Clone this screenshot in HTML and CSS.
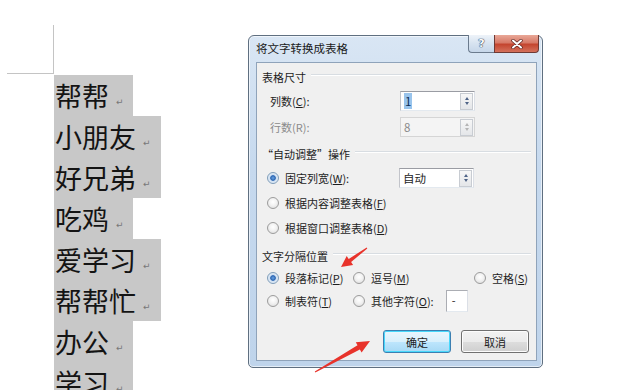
FILE: index.html
```html
<!DOCTYPE html>
<html lang="zh">
<head>
<meta charset="utf-8">
<title>将文字转换成表格</title>
<link rel="stylesheet" href="styles.css">
</head>
<body>
<div class="page">
  <div class="doc">
    <div class="corner"></div>
    <div class="lines">
      <div class="ln w2">帮帮<span class="pm">↵</span></div>
      <div class="ln w3">小朋友<span class="pm">↵</span></div>
      <div class="ln w3">好兄弟<span class="pm">↵</span></div>
      <div class="ln w2">吃鸡<span class="pm">↵</span></div>
      <div class="ln w3">爱学习<span class="pm">↵</span></div>
      <div class="ln w3">帮帮忙<span class="pm">↵</span></div>
      <div class="ln w2">办公<span class="pm">↵</span></div>
      <div class="ln w2">学习<span class="pm">↵</span></div>
    </div>
  </div>

  <div class="dlg">
    <div class="titlebar">
      <span class="title">将文字转换成表格</span>
      <div class="tbtns">
        <span class="help">?</span>
        <span class="close">
          <svg width="12" height="10" viewBox="0 0 12 10"><path d="M2 1.5 L10 8.5 M10 1.5 L2 8.5" stroke="#5a2320" stroke-width="3.4" stroke-linecap="round"/><path d="M2 1.5 L10 8.5 M10 1.5 L2 8.5" stroke="#fff" stroke-width="2" stroke-linecap="round"/></svg>
        </span>
      </div>
    </div>
    <div class="panel">
      <div class="grp g1"><span>表格尺寸</span><i class="rule"></i></div>
      <div class="row r-cols">
        <span class="lab">列数(<u>C</u>):</span>
        <div class="spin"><span class="val"><span class="sel">1</span></span><span class="sb"><i class="up"></i><i class="dn"></i></span></div>
      </div>
      <div class="row r-rows">
        <span class="lab dis">行数(R):</span>
        <div class="spin off"><span class="val">8</span><span class="sb"><i class="up"></i><i class="dn"></i></span></div>
      </div>

      <div class="grp g2"><span>“自动调整”操作</span><i class="rule"></i></div>
      <div class="row rr r-fix">
        <span class="radio on"></span><span class="rlab">固定列宽(<u>W</u>):</span>
        <div class="spin"><span class="val">自动</span><span class="sb"><i class="up"></i><i class="dn"></i></span></div>
      </div>
      <div class="row rr r-gap5">
        <span class="radio"></span><span class="rlab">根据内容调整表格(<u>F</u>)</span>
      </div>
      <div class="row rr r-gap5">
        <span class="radio"></span><span class="rlab">根据窗口调整表格(<u>D</u>)</span>
      </div>

      <div class="grp g3"><span>文字分隔位置</span><i class="rule"></i></div>
      <div class="row rr r-gap5">
        <div class="opt c1"><span class="radio on"></span><span class="rlab">段落标记(<u>P</u>)</span></div>
        <div class="opt c2"><span class="radio"></span><span class="rlab">逗号(<u>M</u>)</span></div>
        <div class="opt"><span class="radio"></span><span class="rlab">空格(<u>S</u>)</span></div>
      </div>
      <div class="row rr r-tab">
        <div class="opt c1"><span class="radio"></span><span class="rlab">制表符(<u>T</u>)</span></div>
        <div class="opt c2"><span class="radio"></span><span class="rlab">其他字符(<u>O</u>):</span><span class="small">-</span></div>
      </div>

      <div class="btns">
        <span class="btn def">确定</span>
        <span class="btn">取消</span>
      </div>
    </div>
  </div>

  <svg class="arrows" width="640" height="390" viewBox="0 0 640 390">
    <polygon fill="#e8332b" points="367.3,248.4 351.1,262.1 353.1,264.9 341,267 346.7,256.1 348.7,258.9 366.7,247.6"/>
    <polygon fill="#e8332b" points="315.3,372.4 359.9,349.6 361.6,352.6 370,341 355.8,342.2 357.5,345.2 314.8,371.6"/>
  </svg>
</div>
</body>
</html>
```

FILE: styles.css
```css
html, body {
  margin: 0;
  padding: 0;
  background: #fff;
}

.page {
  position: relative;
  width: 640px;
  height: 390px;
  overflow: hidden;
  background: #fff;
  font-family: "Noto Sans CJK SC", "Noto Sans", sans-serif;
}

/* ---------- document ---------- */
.doc {
  padding-top: 25px;
}

.corner {
  margin-left: 7px;
  width: 46px;
  height: 48px;
  border-right: 1px solid #c4c4c4;
  border-bottom: 1px solid #c4c4c4;
}

.lines {
  margin-top: 1px;
  margin-left: 54px;
}

.ln {
  height: 41px;
  line-height: 41px;
  font-size: 27px;
  color: #141414;
  background: #c8c8c8;
  padding-left: 1px;
  box-sizing: border-box;
  white-space: nowrap;
}

.w2 { width: 79px; }
.w3 { width: 107px; }

.pm {
  font-family: "DejaVu Sans", sans-serif;
  font-size: 9px;
  color: #777;
  margin-left: 7px;
  vertical-align: 2px;
}

/* ---------- dialog ---------- */
.dlg {
  position: absolute;
  left: 248px;
  top: 35px;
  width: 295px;
  height: 333px;
  box-sizing: border-box;
  border: 1px solid #5f6f80;
  border-radius: 6px 6px 5px 5px;
  background: linear-gradient(#d9e6f4, #c6d9ee 40%, #bfd4eb);
  box-shadow: inset 0 0 0 1px rgba(255,255,255,0.6);
  display: flex;
  flex-direction: column;
  font-size: 11px;
  color: #1e1e1e;
}

.titlebar {
  height: 26px;
  display: flex;
  align-items: flex-start;
  padding-left: 7px;
  padding-right: 3px;
}

.title {
  line-height: 24px;
  font-size: 11.5px;
  color: #1a1a1a;
}

.tbtns {
  margin-left: auto;
  display: flex;
  margin-top: -1px;
}

.help, .close {
  height: 18px;
  box-sizing: border-box;
  border: 1px solid #6b7b8e;
  border-top: none;
  display: flex;
  align-items: center;
  justify-content: center;
}

.help {
  width: 26px;
  border-radius: 0 0 0 4px;
  background: linear-gradient(#eef3f9, #d7e3f0 50%, #c6d6e9);
  font-family: "DejaVu Sans", sans-serif;
  font-size: 11px;
  font-weight: bold;
  color: #fdfdfd;
  text-shadow: 0 0 1px #2d4060, 0 0 1px #2d4060, 0 0 1px #2d4060;
  border-right: none;
}

.close {
  width: 45px;
  border-color: #6e3a35;
  border-radius: 0 0 4px 0;
  background: linear-gradient(#e9a898, #d77a68 45%, #c4452f 55%, #d4715c);
}

.panel {
  flex: 1;
  margin: 0 5px 6px 7px;
  border: 1px solid #8fa3ba;
  background: #f0f0f0;
  padding: 6px 5px 0 5px;
  display: flex;
  flex-direction: column;
}

.grp {
  height: 15px;
  display: flex;
  align-items: center;
  gap: 5px;
  color: #1c1c1c;
  white-space: nowrap;
}

.rule {
  flex: 1;
  height: 1px;
  background: #d8dde2;
  border-bottom: 1px solid #fff;
  margin-top: -3px;
}

.g2 { margin-top: 9px; }
.g3 { margin-top: 10px; }

.row {
  height: 20px;
  display: flex;
  align-items: center;
  white-space: nowrap;
}

.r-cols { margin-top: 7px; padding-left: 8px; }
.r-rows { margin-top: 6px; padding-left: 8px; }
.r-fix { margin-top: 7px; }
.r-gap5 { margin-top: 5px; }
.r-tab { margin-top: 2px; height: 22px; }

.rr { padding-left: 5px; }

.lab {
  width: 130px;
}

.dis { color: #8b8b8b; }

.rlab {
  margin-left: 6px;
}

.r-fix .rlab {
  width: 114px;
}

/* spin box */
.spin {
  width: 75px;
  height: 20px;
  box-sizing: border-box;
  border: 1px solid #abadb3;
  border-top-color: #9a9ca3;
  border-left-color: #c2c4ca;
  border-right-color: #dbdfe6;
  border-bottom-color: #e3e9ef;
  background: #fff;
  display: flex;
  align-items: center;
  padding: 0 1px 0 3px;
}

.spin.off {
  background: #f4f4f4;
  border-color: #d5d5d5;
  color: #8b8b8b;
}

.val {
  flex: 1;
  font-size: 11.5px;
}

.sel {
  background: #99c4ec;
  color: #0f2d55;
  padding: 0 1px;
}

.sb {
  width: 13px;
  height: 17px;
  box-sizing: border-box;
  border: 1px solid #c8ccd2;
  background: linear-gradient(#f7f7f7, #e4e6e9);
  display: flex;
  flex-direction: column;
  justify-content: space-around;
  align-items: center;
  padding: 2px 0;
}

.up, .dn {
  width: 0;
  height: 0;
  border-left: 2.5px solid transparent;
  border-right: 2.5px solid transparent;
}

.up { border-bottom: 3px solid #4f6487; }
.dn { border-top: 3px solid #4f6487; }

.off .up { border-bottom-color: #b5b5b5; }
.off .dn { border-top-color: #b5b5b5; }

/* radio */
.radio {
  width: 12px;
  height: 12px;
  box-sizing: border-box;
  border-radius: 50%;
  border: 1px solid #9c9c9c;
  background: radial-gradient(circle at 50% 40%, #ffffff 0, #f2f2f2 45%, #d8d8d8 100%);
  flex: none;
}

.radio.on {
  border-color: #7f9db9;
  background: radial-gradient(circle at 50% 50%, #6aa5e2 0, #2c65b2 2.4px, #cfe0f2 3.2px, #f4f6f9 100%);
}

.opt {
  display: flex;
  align-items: center;
}

.c1 { width: 86px; }
.c2 { width: 121px; }

.small {
  width: 22px;
  height: 22px;
  box-sizing: border-box;
  border: 1px solid #abadb3;
  border-right-color: #dbdfe6;
  border-bottom-color: #e3e9ef;
  background: #fff;
  margin-left: 12px;
  padding-left: 5px;
  line-height: 19px;
}

/* buttons */
.btns {
  margin-top: 18px;
  display: flex;
  justify-content: flex-end;
  gap: 10px;
  padding-right: 2px;
}

.btn {
  width: 68px;
  height: 23px;
  box-sizing: border-box;
  border: 1px solid #707070;
  border-radius: 3px;
  background: linear-gradient(#f2f2f2, #ebebeb 50%, #dddddd 51%, #cfcfcf);
  box-shadow: inset 0 0 0 1px #fcfcfc;
  display: flex;
  align-items: center;
  justify-content: center;
  color: #1c1c1c;
}

.btn.def {
  border-color: #3c7fb1;
  box-shadow: inset 0 0 0 1px #48d8fb;
  background: linear-gradient(#eaf6fd, #d9f0fc 50%, #bee6fd 51%, #a7d9f5);
}

.arrows {
  position: absolute;
  left: 0;
  top: 0;
}
```
